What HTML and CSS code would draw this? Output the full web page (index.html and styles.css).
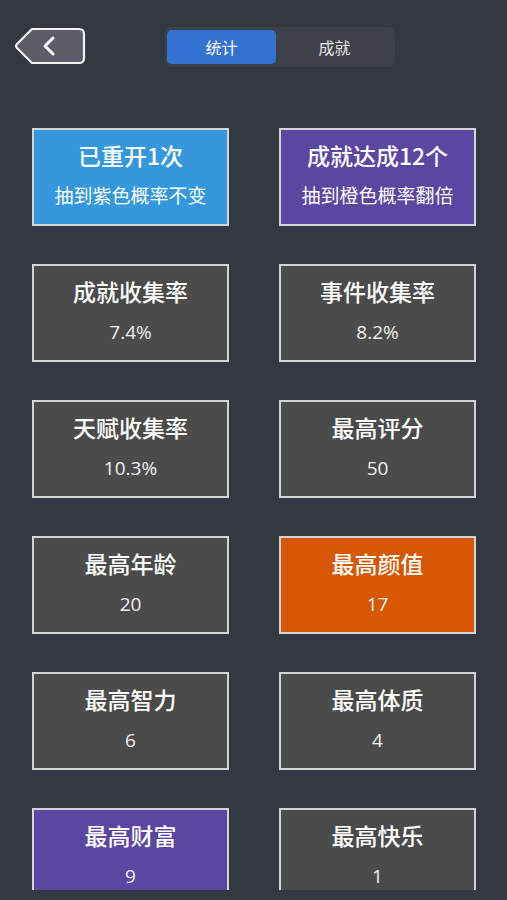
FILE: index.html
```html
<!DOCTYPE html>
<html lang="zh">
<head>
<meta charset="UTF-8">
<meta name="viewport" content="width=device-width, initial-scale=1.0">
<title>统计</title>
<link rel="stylesheet" href="styles.css">
</head>
<body>
  <div class="page">
    <div class="header">
      <button class="back" type="button">
        <svg width="72" height="38" viewBox="0 0 72 38">
          <path d="M18 2 H65 Q70 2 70 7 V31 Q70 36 65 36 H18 L3 21 Q1 19 3 17 Z" fill="#5b5e66" stroke="#f2f2f2" stroke-width="2.2" stroke-linejoin="round"/>
          <path d="M39 11 L31 19 L39 27" fill="none" stroke="#ffffff" stroke-width="3" stroke-linecap="round" stroke-linejoin="round"/>
        </svg>
      </button>
      <div class="tabs">
        <div class="tab active">统计</div>
        <div class="tab">成就</div>
      </div>
    </div>

    <div class="grid">
      <div class="card blue">
        <div class="title">已重开1次</div>
        <div class="sub">抽到紫色概率不变</div>
      </div>
      <div class="card purple">
        <div class="title">成就达成12个</div>
        <div class="sub">抽到橙色概率翻倍</div>
      </div>
      <div class="card">
        <div class="title">成就收集率</div>
        <div class="value">7.4%</div>
      </div>
      <div class="card">
        <div class="title">事件收集率</div>
        <div class="value">8.2%</div>
      </div>
      <div class="card">
        <div class="title">天赋收集率</div>
        <div class="value">10.3%</div>
      </div>
      <div class="card">
        <div class="title">最高评分</div>
        <div class="value">50</div>
      </div>
      <div class="card">
        <div class="title">最高年龄</div>
        <div class="value">20</div>
      </div>
      <div class="card orange">
        <div class="title">最高颜值</div>
        <div class="value">17</div>
      </div>
      <div class="card">
        <div class="title">最高智力</div>
        <div class="value">6</div>
      </div>
      <div class="card">
        <div class="title">最高体质</div>
        <div class="value">4</div>
      </div>
      <div class="card purple">
        <div class="title">最高财富</div>
        <div class="value">9</div>
      </div>
      <div class="card">
        <div class="title">最高快乐</div>
        <div class="value">1</div>
      </div>
    </div>
  </div>
</body>
</html>
```

FILE: styles.css
```css
body {
  margin: 0;
  padding: 0;
  background-color: #343841;
  font-family: "Noto Sans CJK SC", "Noto Sans", sans-serif;
  color: #fff;
}

.page {
  height: 890px;
  overflow: hidden;
}

.header {
  display: flex;
  align-items: flex-start;
  padding: 27px 0 0 14px;
  height: 101px;
  box-sizing: border-box;
}

.back {
  background: none;
  border: none;
  padding: 0;
  margin: 0;
  width: 72px;
  height: 38px;
  cursor: pointer;
}

.back svg {
  display: block;
}

.tabs {
  display: flex;
  margin-left: 79px;
  width: 230px;
  height: 40px;
  padding: 3px 2px;
  box-sizing: border-box;
  background-color: #3e4149;
  border-radius: 7px;
}

.tab {
  flex: 1;
  display: flex;
  align-items: center;
  justify-content: center;
  font-size: 16px;
  color: #e6e6e6;
  border-radius: 5px;
}

.tab.active {
  flex: 0 0 109px;
  background-color: #3273d2;
  color: #fff;
}

.grid {
  display: grid;
  grid-template-columns: 197px 197px;
  column-gap: 50px;
  row-gap: 38px;
  padding-left: 32px;
  padding-top: 27px;
}

.card {
  height: 98px;
  box-sizing: border-box;
  border: 2px solid #d4d4d4;
  background-color: #4b4b4b;
  display: flex;
  flex-direction: column;
  align-items: center;
  padding-top: 9px;
}

.card.blue {
  background-color: #3598dc;
}

.card.purple {
  background-color: #5b46a2;
}

.card.orange {
  background-color: #d65700;
}

.title {
  font-size: 23px;
  font-weight: 500;
  line-height: 32px;
}

.sub {
  font-size: 19px;
  line-height: 26px;
  margin-top: 11px;
}

.value {
  font-size: 19px;
  line-height: 26px;
  margin-top: 12px;
  font-family: "Open Sans", "Noto Sans", sans-serif;
  color: #f0f0f0;
}
```
